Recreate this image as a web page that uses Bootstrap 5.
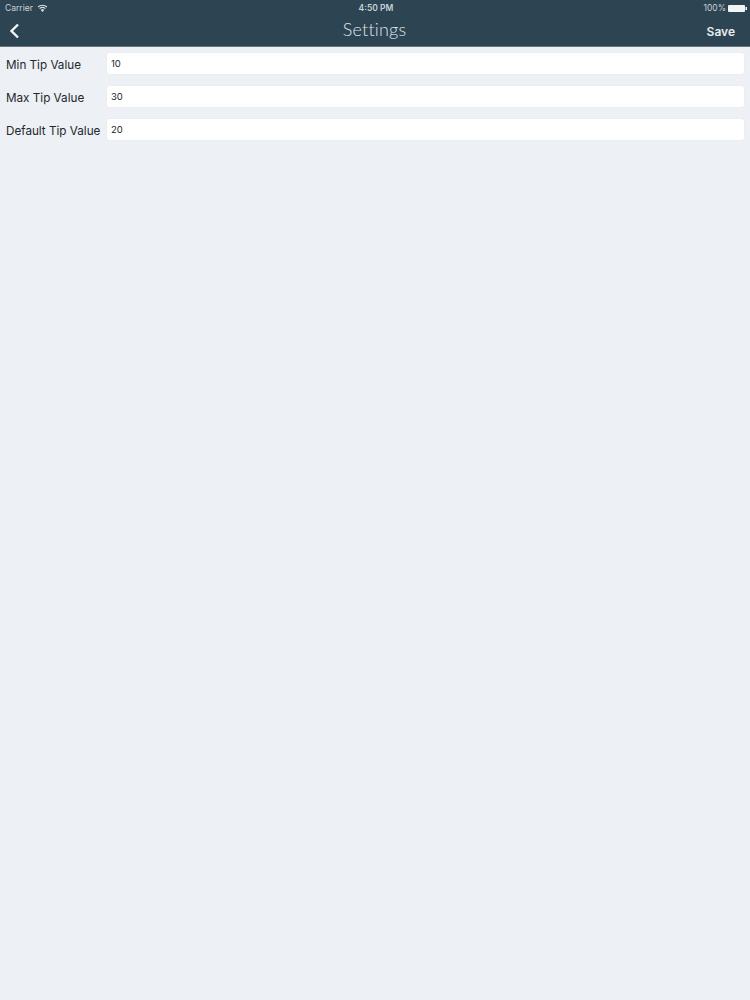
<!DOCTYPE html>
<html lang="en">
<head>
<meta charset="utf-8">
<title>Settings</title>
<link href="https://cdn.jsdelivr.net/npm/bootstrap@5.3.0/dist/css/bootstrap.min.css" rel="stylesheet">
<style>
html, body { height: 100%; }
body { background: #edf0f4; font-family: "Inter", "Liberation Sans", sans-serif; color: #22282c; }
.hdr { background: #2d4453; height: 47px; color: #e6ecef; border-bottom: 1px solid #66737b; }
.stat { height: 15px; padding: 1px 3px 0 5px; font-size: 8.5px; line-height: 13px; color: #c9d3d9; }
.stat-time { font-weight: 600; }
.stat-end { gap: 2px; }
.nav-line { height: 31px; padding: 0 15px 0 9px; }
.nav-title { font-size: 18px; font-weight: 300; font-family: "Lato", sans-serif; letter-spacing: .2px; line-height: 28px; margin-top: -4px; margin-left: 5px; color: #dfe6ea; }
.nav-save { display: block; margin-top: 2px; font-size: 12px; font-weight: 600; color: #e8edf0; }
.slot { flex: 1 1 0; }
.form-area { padding: 6px 6px 0 6px; gap: 12px; }
.lbl { width: 101px; flex: none; font-size: 11.7px; line-height: 21px; height: 21px; padding-top: 2px; color: #22282c; white-space: nowrap; }
.inp.form-control { height: 21px; padding: 0 0 0 4px; font-size: 9.5px; border: 0; border-radius: 2px; background: #fff; color: #22282c; font-family: inherit; box-shadow: 0 0 1px #d5dae0; }
</style>
</head>
<body>
<header class="hdr">
  <div class="stat d-flex align-items-center">
    <div class="slot d-flex align-items-center gap-1">
      <span>Carrier</span>
      <svg width="11" height="8" viewBox="0 0 11 8" aria-hidden="true"><path d="M5.5 8 3.7 5.9a2.7 2.7 0 0 1 3.6 0z" fill="#d5dde2"/><path d="M2.6 4.7a4.3 4.3 0 0 1 5.8 0M1 3a6.6 6.6 0 0 1 9 0" fill="none" stroke="#d5dde2" stroke-width="1.1"/></svg>
    </div>
    <span class="stat-time">4:50 PM</span>
    <div class="slot stat-end d-flex align-items-center justify-content-end">
      <span>100%</span>
      <svg width="19" height="7" viewBox="0 0 19 7" aria-hidden="true"><rect width="17" height="7" rx="1" fill="#f2f5f6"/><rect x="17.5" y="2" width="1.5" height="3" fill="#f2f5f6"/></svg>
    </div>
  </div>
  <div class="nav-line d-flex align-items-center">
    <div class="slot">
      <svg class="d-block" width="11" height="16" viewBox="0 0 11 16" aria-hidden="true"><path d="M9 1.5 2.5 8 9 14.5" fill="none" stroke="#f0f4f6" stroke-width="2.4"/></svg>
    </div>
    <span class="nav-title">Settings</span>
    <div class="slot text-end"><span class="nav-save">Save</span></div>
  </div>
</header>
<main class="form-area d-flex flex-column">
  <div class="d-flex"><label class="lbl" for="a">Min Tip Value</label><input id="a" class="form-control inp" value="10"></div>
  <div class="d-flex"><label class="lbl" for="b">Max Tip Value</label><input id="b" class="form-control inp" value="30"></div>
  <div class="d-flex"><label class="lbl" for="c">Default Tip Value</label><input id="c" class="form-control inp" value="20"></div>
</main>
<script src="https://cdn.jsdelivr.net/npm/bootstrap@5.3.0/dist/js/bootstrap.bundle.min.js"></script>
</body>
</html>
